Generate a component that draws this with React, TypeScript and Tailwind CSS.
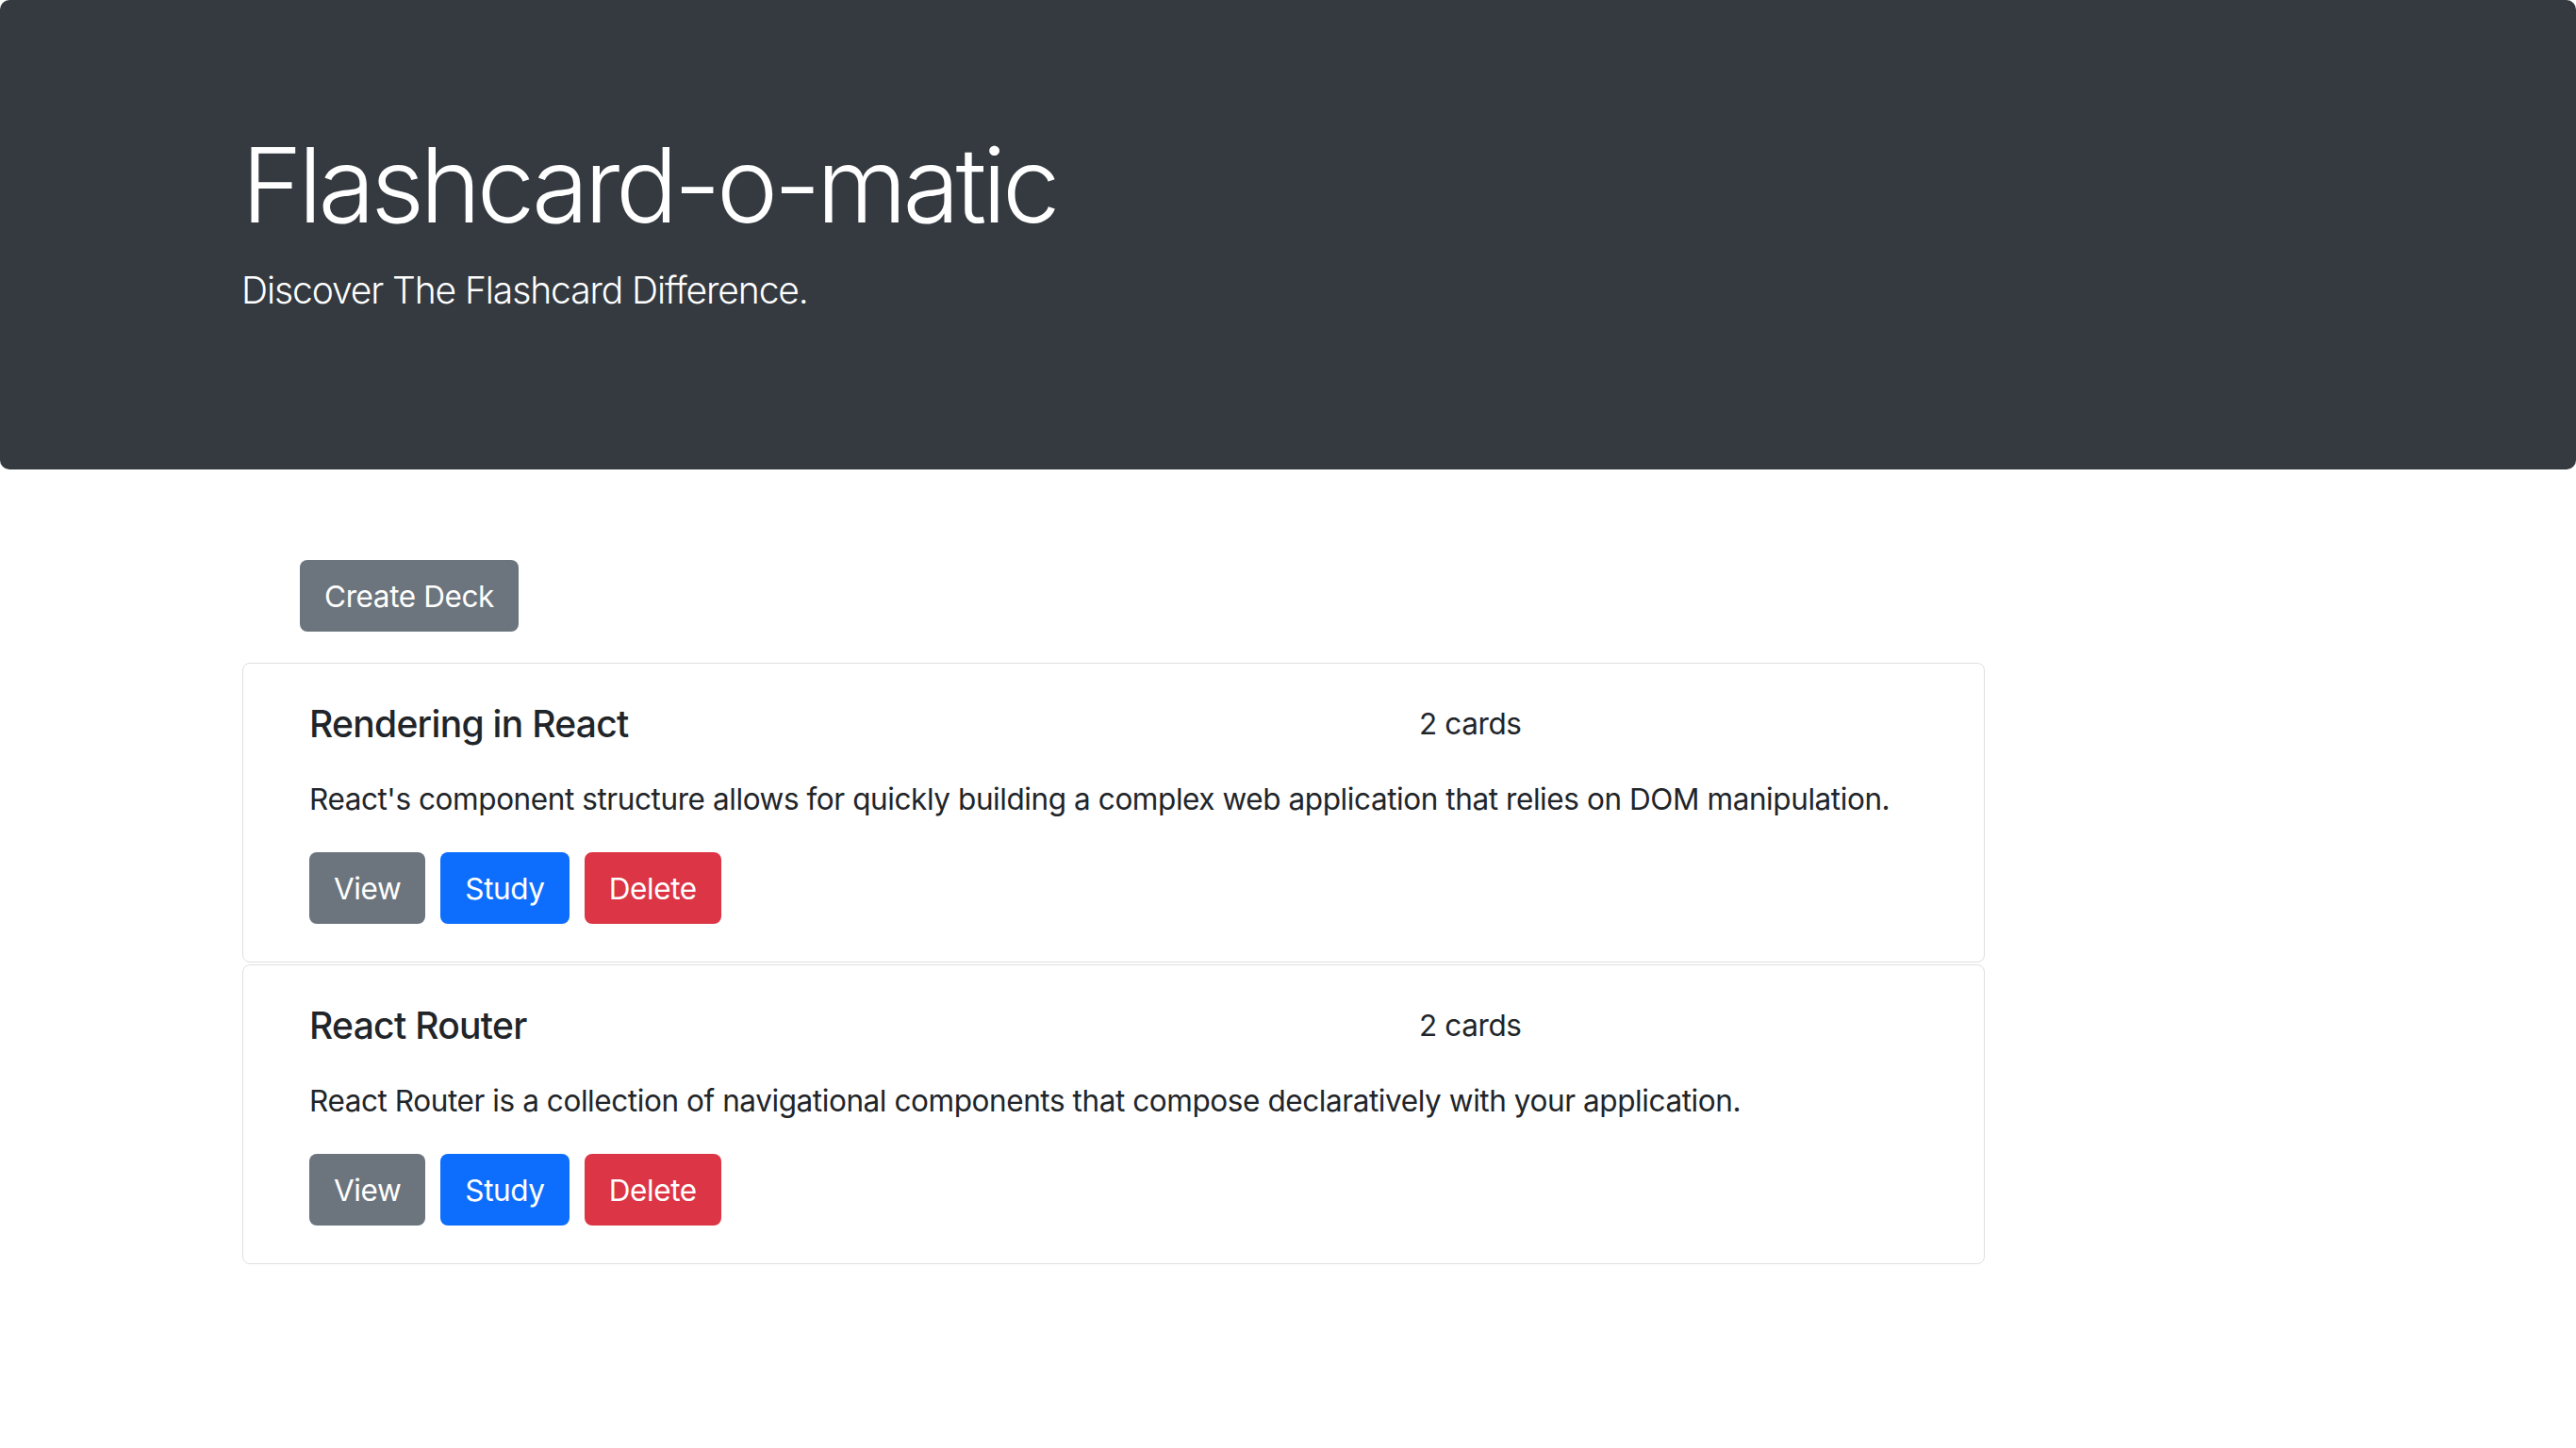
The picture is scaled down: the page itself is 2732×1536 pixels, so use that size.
import React from "react";

interface Deck {
  id: number;
  name: string;
  description: string;
  cards: number;
}

const decks: Deck[] = [
  {
    id: 1,
    name: "Rendering in React",
    description:
      "React's component structure allows for quickly building a complex web application that relies on DOM manipulation.",
    cards: 2,
  },
  {
    id: 2,
    name: "React Router",
    description:
      "React Router is a collection of navigational components that compose declaratively with your application.",
    cards: 2,
  },
];

const btn =
  "h-[76px] rounded-[8px] text-white text-[31.5px] leading-[47px] tracking-[-0.4px] whitespace-nowrap border border-transparent";

const DeckCard: React.FC<{ deck: Deck }> = ({ deck }) => (
  <div className="border border-[#dfdfdf] rounded-[8px] pt-[40px] pb-[40px] pl-[70px] pr-[40px]">
    <div className="flex">
      <h5 className="w-[1177px] text-[39px] leading-[47px] font-medium tracking-[-0.7px] text-[#212529]">
        {deck.name}
      </h5>
      <span className="text-[31.5px] leading-[47px] tracking-[-0.4px] text-[#212529]">{deck.cards} cards</span>
    </div>
    <p className="mt-[33px] text-[31.5px] leading-[47px] tracking-[-0.42px] text-[#212529]">{deck.description}</p>
    <div className="mt-[33px] flex gap-[16px]">
      <button className={`${btn} px-[25px] bg-[#6c757d]`}>View</button>
      <button className={`${btn} px-[25px] bg-[#0d6efd]`}>Study</button>
      <button className={`${btn} px-[25px] bg-[#dc3545]`}>Delete</button>
    </div>
  </div>
);

export default function App() {
  return (
    <div className="min-h-screen bg-white font-['Inter','Liberation_Sans',sans-serif]">
      <header className="bg-[#343a40] rounded-[10px] text-white pt-[130px] pb-[161px] pl-[256px]">
        <h1 className="text-[110px] leading-[132px] font-light tracking-[-4.5px]">Flashcard-o-matic</h1>
        <p className="mt-[16px] text-[39px] leading-[59px] font-light tracking-[-1.1px]">
          Discover The Flashcard Difference.
        </p>
      </header>
      <main className="pl-[257px] w-[2105px]">
        <button className={`${btn} mt-[96px] ml-[61px] mb-[33px] bg-[#6c757d] w-[232px]`}>Create Deck</button>
        <div className="flex flex-col gap-[2px]">
          {decks.map((d) => (
            <DeckCard key={d.id} deck={d} />
          ))}
        </div>
      </main>
    </div>
  );
}
